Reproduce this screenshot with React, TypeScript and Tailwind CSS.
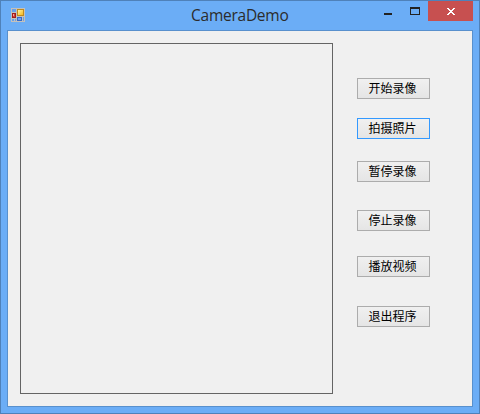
const actions = [
  { label: '开始录像', space: 'mt-[47px]' },
  { label: '拍摄照片', space: 'mt-[19px]', focused: true },
  { label: '暂停录像', space: 'mt-[22px]' },
  { label: '停止录像', space: 'mt-[28px]' },
  { label: '播放视频', space: 'mt-[25px]' },
  { label: '退出程序', space: 'mt-[29px]' },
];

function AppIcon() {
  return (
    <svg width="14" height="14" viewBox="0 0 14 14" shapeRendering="crispEdges">
      <defs>
        <linearGradient id="gold" x1="0" y1="0" x2="1" y2="1">
          <stop offset="0" stopColor="#fff3a0" />
          <stop offset="1" stopColor="#f4b820" />
        </linearGradient>
      </defs>
      <rect width="14" height="14" fill="#c4c1bc" />
      <rect x="1" y="1" width="4" height="3" fill="#68a0e8" />
      <rect x="1" y="11" width="2" height="2" fill="#68a0e8" />
      <rect x="4" y="11" width="1" height="2" fill="#68a0e8" />
      <rect x="1" y="5" width="4" height="5" fill="#a01c1c" />
      <rect x="2" y="6" width="2" height="3" fill="#d0403a" />
      <rect x="2" y="6" width="1" height="2" fill="#f3a49a" />
      <rect x="6" y="1" width="7" height="7" fill="#c08a1c" />
      <rect x="7" y="2" width="5" height="5" fill="url(#gold)" />
      <rect x="6" y="9" width="5" height="4" fill="#376bc8" />
      <rect x="7" y="10" width="3" height="2" fill="#70a0ee" />
      <rect x="12" y="9" width="1" height="4" fill="#68a0e8" />
    </svg>
  );
}

function TitleBar() {
  return (
    <header className="flex h-[29px] items-start">
      <div className="w-[190px] pl-[10px] pt-[7px]">
        <AppIcon />
      </div>
      <h1 className="w-[99px] whitespace-nowrap pt-[2px] font-['Open_Sans',sans-serif] text-[15.5px] leading-6 tracking-[-0.25px] text-[#2b2b2b]">
        CameraDemo
      </h1>
      <div className="ml-auto mr-[6px] flex">
        <button className="flex h-5 w-[22px] pl-0 pt-3" aria-label="Minimize">
          <span className="block h-[2px] w-2 bg-[#222]" />
        </button>
        <button className="flex h-5 w-[22px] pl-1 pt-[6px]" aria-label="Maximize">
          <span className="block h-2 w-[10px] border border-t-2 border-[#222]" />
        </button>
        <button className="flex h-5 w-[45px] bg-[#c75050] pl-[19px] pt-[7px]" aria-label="Close">
          <svg width="8" height="7" viewBox="0 0 8 7" fill="#fff" shapeRendering="crispEdges">
            <path d="M0 0h2v1h1v1h2v-1h1v-1h2v1h-1v1h-1v1h-1v1h1v1h1v1h1v1h-2v-1h-1v-1h-2v1h-1v1h-2v-1h1v-1h1v-1h1v-1h-1v-1h-1v-1h-1z" />
          </svg>
        </button>
      </div>
    </header>
  );
}

export default function App() {
  return (
    <div className="flex h-[414px] w-[480px] flex-col border border-[#4f81b9] bg-[#6badf6]">
      <TitleBar />
      <main className="mx-[6px] flex h-[377px] border border-[#5890cd] bg-[#f0f0f0]">
        <div className="ml-3 mt-3 h-[351px] w-[313px] border border-[#646464]" />
        <div className="ml-6 flex w-[73px] flex-col">
          {actions.map((a) => (
            <button
              key={a.label}
              className={`h-[21px] w-[73px] shrink-0 whitespace-nowrap border bg-linear-to-b from-[#f0f0f0] to-[#e5e5e5] pb-px pr-[2px] font-['Noto_Sans_CJK_SC',sans-serif] text-[12px] leading-[18px] text-black ${a.space} ${a.focused ? 'border-[#3399ff]' : 'border-[#acacac]'}`}
            >
              {a.label}
            </button>
          ))}
        </div>
      </main>
    </div>
  );
}
